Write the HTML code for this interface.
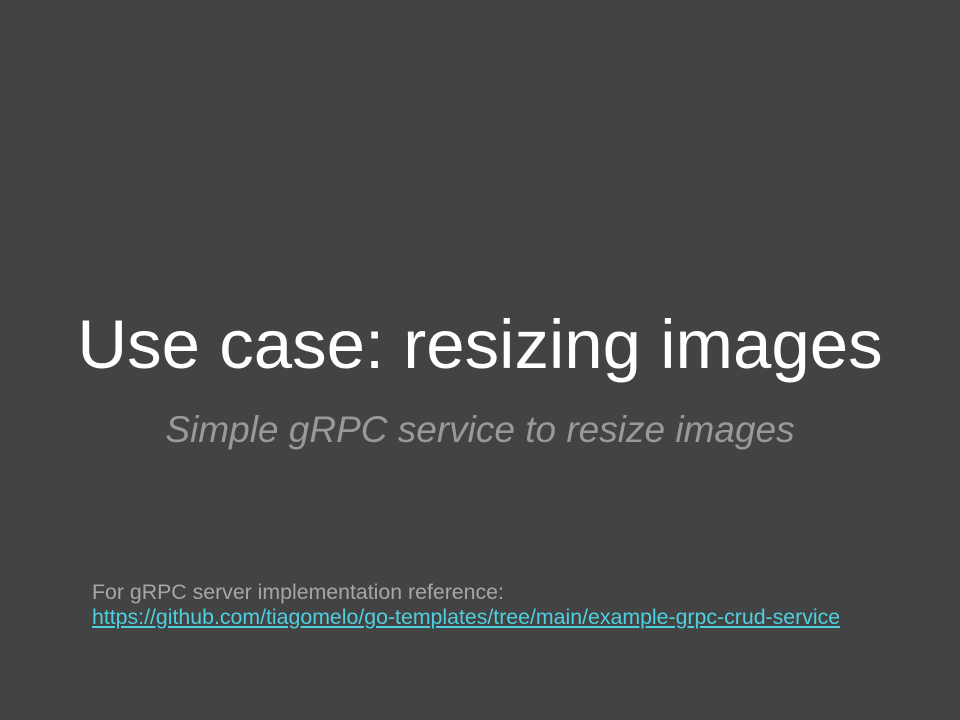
<!DOCTYPE html>
<html><head><meta charset="utf-8"><style>
html,body{margin:0;padding:0;}
body{width:960px;height:720px;background:#434343;position:relative;overflow:hidden;font-family:"Liberation Sans",Arial,sans-serif;}
.t{position:absolute;left:0;width:960px;text-align:center;color:#fff;font-size:69px;top:305px;line-height:80px;white-space:nowrap;}
.s{position:absolute;left:0;width:960px;text-align:center;color:#999;font-size:37px;font-style:italic;top:408px;line-height:44px;white-space:nowrap;}
.f{position:absolute;left:92px;top:580px;font-size:21.3px;line-height:25px;color:#a6a6a6;white-space:nowrap;}
.f a{color:#4dd0e1;text-decoration:underline;}
</style></head><body>
<div class="t">Use case: resizing images</div>
<div class="s">Simple gRPC service to resize images</div>
<div class="f">For gRPC server implementation reference:<br><a>https://github.com/tiagomelo/go-templates/tree/main/example-grpc-crud-service</a></div>
</body></html>
